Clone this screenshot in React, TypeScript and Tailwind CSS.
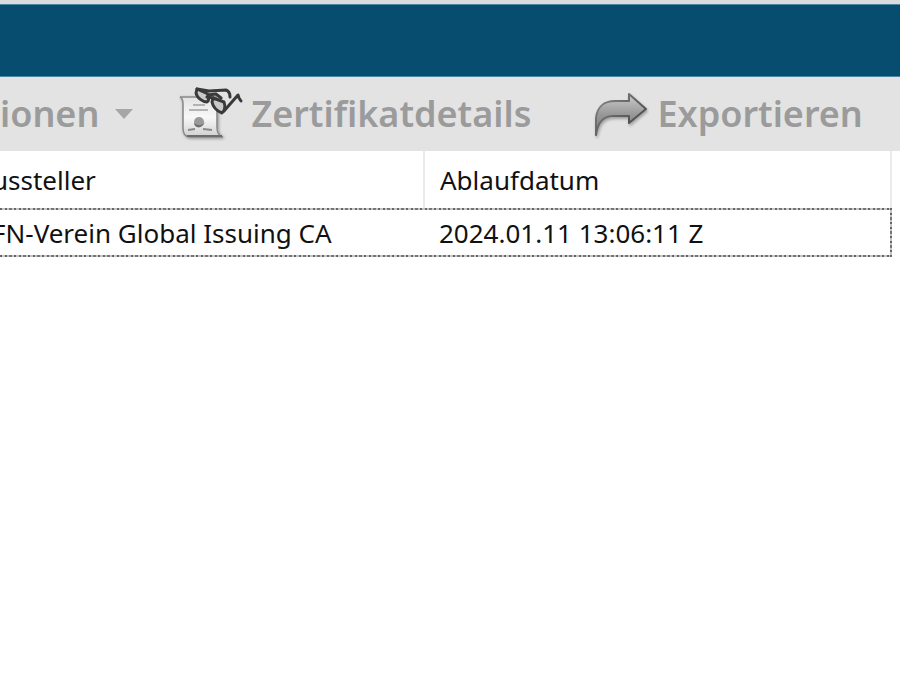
import type {ReactNode} from 'react'

const CertificateIcon = () => (
    <svg className="shrink-0" width="64" height="56" viewBox="180 86 64 56" fill="none" aria-hidden="true">
        <defs>
            <linearGradient id="paper" x1="0" y1="0" x2="0" y2="1">
                <stop offset="0" stopColor="#e2e2e2" />
                <stop offset="0.5" stopColor="#f8f8f8" />
                <stop offset="1" stopColor="#d0d0d0" />
            </linearGradient>
            <filter id="paperShadow" x="-20%" y="-20%" width="150%" height="150%">
                <feDropShadow dx="1" dy="1" stdDeviation="1.5" floodColor="#000" floodOpacity="0.35" />
            </filter>
        </defs>
        <g filter="url(#paperShadow)">
            <path
                d="M181 97H217C219 101 218 108 218 113V127C218 132 220 136 224 137H191C186 137 184 133 184 128V104C184 100 183 98 181 97Z"
                fill="url(#paper)"
                stroke="#8b8b8b"
                strokeWidth="1.6"
            />
            <path d="M188 136H223" stroke="#6c6c6c" strokeWidth="2" />
        </g>
        <path d="M194 105H206M190 110H209" stroke="#a0a0a0" strokeWidth="1.5" />
        <path d="M189 130L196 129M204 129L213 130" stroke="#888" strokeWidth="2" />
        <circle cx="200" cy="122" r="5" fill="#999" />
        <path d="M195 123C196 129 203 129 206 122C203 126 199 126 195 123Z" fill="#6c6c6c" />
        <path
            d="M198 89L209 94C210 98 210 101 208 102C204 102 198 98 197 93ZM214 98L225 102C227 107 225 112 223 113C218 111 214 107 213 102Z"
            fill="#c9c9c9"
            stroke="#3a3a3a"
            strokeWidth="3"
            strokeLinejoin="round"
        />
        <path
            d="M198 89L210 91L227 90C230 91 231 93 231 97M209 95L217 94L222 98M225 111L239 95L240 98L242 101M208 97L214 98"
            stroke="#3a3a3a"
            strokeWidth="3"
            strokeLinecap="round"
            strokeLinejoin="round"
        />
    </svg>
)

const ExportIcon = () => (
    <svg className="shrink-0" width="56" height="56" viewBox="594 86 56 56" fill="none" aria-hidden="true">
        <defs>
            <linearGradient id="arrow" x1="0" y1="0" x2="0" y2="1">
                <stop offset="0" stopColor="#cccccc" />
                <stop offset="0.5" stopColor="#989898" />
                <stop offset="1" stopColor="#777" />
            </linearGradient>
            <linearGradient id="arrowEdge" x1="0" y1="0" x2="1" y2="1">
                <stop offset="0" stopColor="#8a8a8a" />
                <stop offset="1" stopColor="#3a3a3a" />
            </linearGradient>
            <filter id="arrowShadow" x="-20%" y="-20%" width="150%" height="150%">
                <feDropShadow dx="1" dy="2" stdDeviation="1.5" floodColor="#000" floodOpacity="0.3" />
            </filter>
        </defs>
        <path
            d="M597 135V118C598 107 605 101 616 101H630V94L647 109L630 123V116H615C604 116 599 122 597 135Z"
            fill="url(#arrow)"
            stroke="url(#arrowEdge)"
            strokeWidth="2"
            strokeLinejoin="round"
            filter="url(#arrowShadow)"
        />
    </svg>
)

const ToolbarButton = ({children}: {children: ReactNode}) => (
    <button
        type="button"
        className="flex shrink-0 items-center gap-2 text-[36px] leading-10 font-semibold text-[#9b9b9b]"
    >
        {children}
    </button>
)

const dottedLine =
    'bg-[repeating-linear-gradient(90deg,#666_0_2px,#c4c4c4_2px_5px,#666_5px_7px,#c4c4c4_7px_9px,#777_9px_12px,#c4c4c4_12px_14px)]'
const dottedSide =
    'bg-[repeating-linear-gradient(180deg,#666_0_2px,#c4c4c4_2px_5px,#666_5px_7px,#c4c4c4_7px_9px,#777_9px_12px,#c4c4c4_12px_14px)]'

const App = () => {
    return (
        <div className="min-h-screen overflow-hidden bg-white font-['Noto_Sans',sans-serif] text-[#111]">
            <div className="h-1 bg-[#dcdcdc]" />
            <header className="h-[73px] border-y border-[#4c86a3] bg-[#064d70]" />

            <div className="flex h-[74px] items-center bg-[#e3e3e3]" role="toolbar">
                <ToolbarButton>
                    ionen
                    <svg className="mx-2" width="18" height="10" viewBox="0 0 18 10" aria-hidden="true">
                        <path d="M0 0H18L9 10Z" fill="#a6a6a6" />
                    </svg>
                </ToolbarButton>
                <div className="w-[38px] shrink-0" />
                <ToolbarButton>
                    <CertificateIcon />
                    Zertifikatdetails
                </ToolbarButton>
                <div className="w-[62px] shrink-0" />
                <ToolbarButton>
                    <ExportIcon />
                    Exportieren
                </ToolbarButton>
            </div>

            <div className="relative mr-2">
                <table className="w-full table-fixed border-collapse text-left text-[26px] leading-[30px]">
                    <colgroup>
                        <col className="w-[424px]" />
                        <col />
                    </colgroup>
                    <thead>
                        <tr className="h-[57px]">
                            <th className="border-r-2 border-[#ebebeb] p-0 font-normal">
                                <div className="-ml-2">ussteller</div>
                            </th>
                            <th className="border-r-2 border-[#ebebeb] py-0 pr-0 pl-[15px] font-normal">Ablaufdatum</th>
                        </tr>
                    </thead>
                    <tbody>
                        <tr className="h-[49px]">
                            <td className="p-0 whitespace-nowrap">
                                <div className="-ml-2">FN-Verein Global Issuing CA</div>
                            </td>
                            <td className="py-0 pr-0 pl-[15px] whitespace-nowrap">2024.01.11 13:06:11 Z</td>
                        </tr>
                    </tbody>
                </table>
                {/* focus rectangle of the selected row */}
                <div className="pointer-events-none absolute inset-x-0 bottom-0 h-[49px]">
                    <div className={`absolute inset-x-0 top-0 h-0.5 ${dottedLine}`} />
                    <div className={`absolute inset-x-0 bottom-0 h-0.5 ${dottedLine}`} />
                    <div className={`absolute inset-y-0 right-0 w-0.5 ${dottedSide}`} />
                </div>
            </div>
        </div>
    )
}

export default App
